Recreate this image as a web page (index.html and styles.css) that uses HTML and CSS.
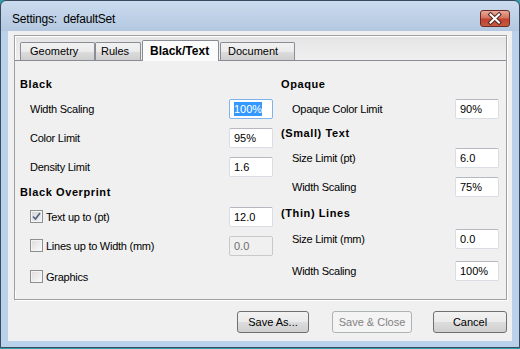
FILE: index.html
```html
<!DOCTYPE html>
<html lang="en">
<head>
    <meta charset="UTF-8">
    <meta name="viewport" content="width=device-width, initial-scale=1.0">
    <title>Settings: defaultSet</title>
    <link rel="stylesheet" href="styles.css">
</head>
<body>
    <div id="window">
        <div id="titlebar">
            <span class="title">Settings:&nbsp; defaultSet</span>
            <span class="close">
                <svg width="30" height="17" viewBox="0 0 30 17">
                    <path d="M10.5 4.5 L19 12.5 M19 4.5 L10.5 12.5" stroke="#4a2520" stroke-width="4" stroke-linecap="square"/>
                    <path d="M10.5 4.5 L19 12.5 M19 4.5 L10.5 12.5" stroke="#fff" stroke-width="2" stroke-linecap="square"/>
                </svg>
            </span>
        </div>
        <div id="client">
            <div id="frame">
                <div class="tabs">
                    <div class="tab geo">Geometry</div>
                    <div class="tab rules">Rules</div>
                    <div class="tab on">Black/Text</div>
                    <div class="tab doc">Document</div>
                </div>
                <div id="pane">
                    <!-- left column -->
                    <div class="col left">
                        <div class="head">Black</div>
                        <div class="row"><span>Width Scaling</span><span class="field focus"><span class="sel">100%</span></span></div>
                        <div class="row"><span>Color Limit</span><span class="field">95%</span></div>
                        <div class="row"><span>Density Limit</span><span class="field">1.6</span></div>
                        <div class="head m1">Black Overprint</div>
                        <div class="row"><span class="check"><span class="box on"><svg width="9" height="9" viewBox="0 0 9 9"><path d="M1 4.5 L3.5 7 L8 1" fill="none" stroke="#4d6185" stroke-width="1.6"/></svg></span>Text up to (pt)</span><span class="field">12.0</span></div>
                        <div class="row"><span class="check"><span class="box"></span>Lines up to Width (mm)</span><span class="field off">0.0</span></div>
                        <div class="row m2"><span class="check"><span class="box"></span>Graphics</span></div>
                    </div>
                    <!-- right column -->
                    <div class="col right">
                        <div class="head">Opaque</div>
                        <div class="row"><span>Opaque Color Limit</span><span class="field">90%</span></div>
                        <div class="head">(Small) Text</div>
                        <div class="row"><span>Size Limit (pt)</span><span class="field">6.0</span></div>
                        <div class="row"><span>Width Scaling</span><span class="field">75%</span></div>
                        <div class="head m2">(Thin) Lines</div>
                        <div class="row m1"><span>Size Limit (mm)</span><span class="field">0.0</span></div>
                        <div class="row m3"><span>Width Scaling</span><span class="field">100%</span></div>
                    </div>
                </div>
            </div>
            <div class="buttons">
                <button class="btn save-as">Save As...</button>
                <button class="btn save-close" disabled>Save &amp; Close</button>
                <button class="btn cancel">Cancel</button>
            </div>
        </div>
    </div>
</body>
</html>
```

FILE: styles.css
```css
body{
    margin: 0;
    background: #2e9fae;
    font-family: "Liberation Sans", Arial, sans-serif;
    font-size: 11px;
    color: #000;
}
#window{
    width: 520px;
    height: 348px;
    box-sizing: border-box;
    border: 1px solid #3b4a5c;
    border-radius: 6px 6px 0 0;
    background: linear-gradient(#cbdbee, #b3c8e0 30px, #b9d1ea 30px);
    display: flex;
    flex-direction: column;
}
#titlebar{
    height: 30px;
    box-sizing: border-box;
    padding: 5px 9px 0 11px;
    display: flex;
    align-items: center;
    justify-content: space-between;
}
.title{
    font-size: 12px;
    letter-spacing: -0.2px;
}
.close{
    width: 30px;
    height: 17px;
    box-sizing: border-box;
    border: 1px solid #6b2a22;
    border-radius: 3px;
    background: linear-gradient(#e9a99a, #d47361 45%, #c0422f 55%, #c65a3f);
    display: flex;
}
.close svg{
    margin: -1px;
}
#client{
    flex: 1;
    margin: 0 7px 6px 7px;
    background: #f0f0f0;
    padding: 4px 5px 0 6px;
    display: flex;
    flex-direction: column;
}
#frame{
    height: 265px;
    box-sizing: border-box;
    border: 1px solid #a0a0a0;
    box-shadow: 1px 1px 0 #fff, inset 1px 1px 0 #fff;
    background: linear-gradient(#e4e4e4, #f0f0f0 25px);
}
.tabs{
    height: 20px;
    padding: 4px 0 0 5px;
    display: flex;
    align-items: flex-end;
}
.tab{
    height: 18px;
    box-sizing: border-box;
    padding: 2px 0 0 7px;
    border: 1px solid #898c95;
    border-bottom: none;
    border-radius: 2px 2px 0 0;
    background: linear-gradient(#f2f2f2, #ebebeb 50%, #dddddd 50%, #cfcfcf);
}
.geo{
    width: 75px;
    padding-left: 9px;
}
.rules{
    width: 46px;
    padding-left: 5px;
}
.doc{
    width: 75px;
}
.tab.on{
    width: 77px;
    height: 21px;
    margin: 0 1px -1px 1px;
    padding-top: 3px;
    font-weight: bold;
    font-size: 12px;
    background: #fbfbfb;
}
#pane{
    border-top: 1px solid #898c95;
    padding: 13px 7px 0 5px;
    display: grid;
    grid-template-columns: 253px 218px;
    column-gap: 8px;
    background: #f0f0f0;
}
.head{
    height: 20px;
    display: flex;
    align-items: center;
    font-weight: bold;
    letter-spacing: 0.6px;
}
.row{
    height: 29px;
    display: flex;
    align-items: center;
    justify-content: space-between;
    padding-left: 10px;
    letter-spacing: -0.25px;
}
.right .row{
    padding-left: 11px;
}
.m1{
    margin-top: 1px;
}
.m2{
    margin-top: 2px;
}
.m3{
    margin-top: 3px;
}
.field{
    width: 44px;
    height: 20px;
    box-sizing: border-box;
    border: 1px solid #dadde3;
    border-top-color: #b5b8c0;
    border-radius: 2px;
    background: #fff;
    padding: 0 0 0 4px;
    display: flex;
    align-items: center;
    letter-spacing: 0;
}
.field.focus{
    border-color: #7eb4ea;
}
.sel{
    background: #3399ff;
    color: #fff;
    padding: 1px 0;
}
.field.off{
    background: #f0f0f0;
    border-color: #c9c9c9;
    color: #6d6d6d;
}
.check{
    display: flex;
    align-items: center;
    gap: 3px;
}
.box{
    width: 13px;
    height: 13px;
    box-sizing: border-box;
    border: 1px solid #8e8f8f;
    background: linear-gradient(135deg, #dcdcdc, #fbfbfb);
    box-shadow: inset 0 0 0 1px #f4f4f4;
    display: flex;
    align-items: center;
    justify-content: center;
}
.box.on{
    background: linear-gradient(135deg, #d3d3d3, #f4f4f4);
}
.buttons{
    margin-top: 11px;
    display: flex;
    justify-content: flex-end;
}
.btn{
    height: 22px;
    font-family: "Liberation Sans", Arial, sans-serif;
    font-size: 11px;
    color: #000;
    border: 1px solid #707070;
    border-radius: 3px;
    background: linear-gradient(#f2f2f2, #ebebeb 50%, #dddddd 50%, #cfcfcf);
    padding: 0;
}
.save-as{
    width: 72px;
}
.save-close{
    width: 80px;
    margin-left: 23px;
    color: #838383;
    border-color: #adb2b5;
    background: #f4f4f4;
}
.cancel{
    width: 74px;
    margin-left: 21px;
}
```
